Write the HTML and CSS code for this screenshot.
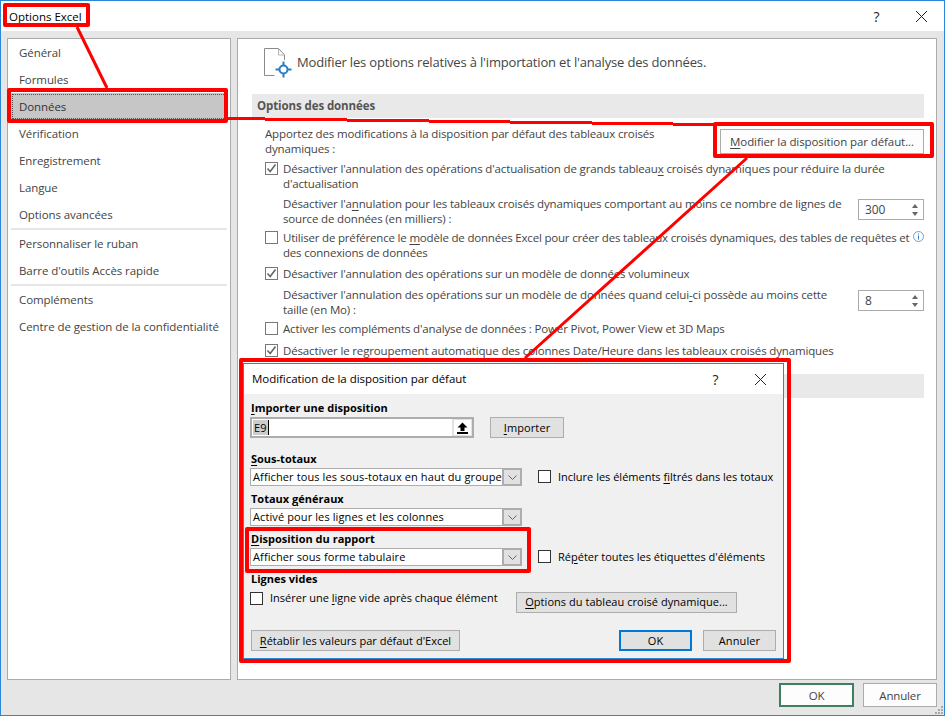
FILE: index.html
```html
<!DOCTYPE html>
<html lang="fr">
<head>
    <meta charset="UTF-8">
    <meta name="viewport" content="width=device-width, initial-scale=1.0">
    <title>Options Excel</title>
    <link rel="stylesheet" href="styles.css">
</head>
<body>
    <div class="window">
        <div class="titlebar">
            <span class="title">Options Excel</span>
            <span class="title-btn help">?</span>
            <span class="title-btn">
                <svg width="13" height="13" viewBox="0 0 13 13"><path d="M1 1 L12 12 M12 1 L1 12" stroke="#222" fill="none"/></svg>
            </span>
        </div>

        <div class="main">
            <div class="nav">
                <div class="nav-item">Général</div>
                <div class="nav-item">Formules</div>
                <div class="nav-item selected">Données</div>
                <div class="nav-item">Vérification</div>
                <div class="nav-item">Enregistrement</div>
                <div class="nav-item">Langue</div>
                <div class="nav-item">Options avancées</div>
                <div class="nav-sep"></div>
                <div class="nav-item">Personnaliser le ruban</div>
                <div class="nav-item">Barre d'outils Accès rapide</div>
                <div class="nav-sep"></div>
                <div class="nav-item">Compléments</div>
                <div class="nav-item">Centre de gestion de la confidentialité</div>
            </div>

            <div class="panel">
                <div class="panel-head">
                    <svg class="head-icon" width="30" height="32" viewBox="0 0 30 32">
                        <path d="M10.5 28.5 H0.5 V1.5 H14.5 L20.5 8 V13" fill="none" stroke="#8a8a8a"/>
                        <path d="M14.5 1.5 V8 H20.5" fill="none" stroke="#b5b5b5"/>
                        <circle cx="19.5" cy="22.5" r="4" fill="#fff" stroke="#2e7cc4" stroke-width="2"/>
                        <path d="M19.5 14.5 V18 M19.5 27 V30.5 M11.5 22.5 H15 M24 22.5 H27.5" stroke="#2e7cc4" stroke-width="2" fill="none"/>
                    </svg>
                    <span class="head-text">Modifier les options relatives à l'importation et l'analyse des données.</span>
                </div>

                <div class="section-bar">Options des données</div>

                <div class="options">
                    <div class="intro">
                        <div>Apportez des modifications à la disposition par défaut des tableaux croisés<br>dynamiques :</div>
                        <div class="btn btn-modify"><span><u>M</u>odifier la disposition par défaut...</span></div>
                    </div>

                    <div class="check-row row-1">
                        <span class="box checked">
                            <svg width="11" height="11" viewBox="0 0 11 11"><path d="M1.5 5.5 L4.2 8.5 L9.5 1.5" fill="none" stroke="#666" stroke-width="1.6"/></svg>
                        </span>
                        <div>Désactiver l'annulation des opérations d'actualisation de grands tableau<u>x</u> croisés dynamiques pour réduire la durée<br>d'actualisation</div>
                    </div>
                    <div class="sub-row row-2">
                        <div>Désactiver l'a<u>n</u>nulation pour les tableaux croisés dynamiques comportant au moins ce nombre de lignes de<br>source de données (en milliers) :</div>
                        <div class="spinner">300<span class="spin-arrows"><i class="up"></i><i class="down"></i></span></div>
                    </div>
                    <div class="check-row row-3 tight">
                        <span class="box"></span>
                        <div>Utiliser de préférence le <u>m</u>odèle de données Excel pour créer des tableaux croisés dynamiques, des tables de requêtes et<br>des connexions de données</div>
                        <svg class="info" width="11" height="11" viewBox="0 0 11 11">
                            <circle cx="5.5" cy="5.5" r="5" fill="none" stroke="#6f9fd8"/>
                            <path d="M5.5 2.5 V3.5 M5.5 4.5 V8.5" stroke="#2e7cc4" fill="none"/>
                        </svg>
                    </div>
                    <div class="check-row row-4">
                        <span class="box checked">
                            <svg width="11" height="11" viewBox="0 0 11 11"><path d="M1.5 5.5 L4.2 8.5 L9.5 1.5" fill="none" stroke="#666" stroke-width="1.6"/></svg>
                        </span>
                        <div>Désactiver l'annulation des opérations sur un modèle de données volumineux</div>
                    </div>
                    <div class="sub-row row-4">
                        <div>Désactiver l'annulation des opérations sur un modèle de données quand celui<u>-</u>ci possède au moins cette<br>taille (en Mo) :</div>
                        <div class="spinner">8<span class="spin-arrows"><i class="up"></i><i class="down"></i></span></div>
                    </div>
                    <div class="check-row row-3">
                        <span class="box"></span>
                        <div>Activer les compléments d'analyse de données : Power Pivot, Power View et 3D Maps</div>
                    </div>
                    <div class="check-row row-5">
                        <span class="box checked">
                            <svg width="11" height="11" viewBox="0 0 11 11"><path d="M1.5 5.5 L4.2 8.5 L9.5 1.5" fill="none" stroke="#666" stroke-width="1.6"/></svg>
                        </span>
                        <div>Désactiver le regroupement automatique des colonnes Date/Heure dans les tableaux croisés dynamiques</div>
                    </div>
                </div>

                <div class="section-bar bar-2"></div>
            </div>
        </div>

        <div class="footer">
            <div class="btn btn-ok">OK</div>
            <div class="btn btn-cancel">Annuler</div>
        </div>
        <svg class="grip" width="10" height="10" viewBox="0 0 10 10" fill="#a8a8a8">
            <rect x="7" y="1" width="2" height="2"/><rect x="4" y="4" width="2" height="2"/><rect x="7" y="4" width="2" height="2"/>
            <rect x="1" y="7" width="2" height="2"/><rect x="4" y="7" width="2" height="2"/><rect x="7" y="7" width="2" height="2"/>
        </svg>

        <!-- boite de dialogue par dessus -->
        <div class="dialog">
            <div class="dlg-titlebar">
                <span class="dlg-title">Modification de la disposition par défaut</span>
                <span class="title-btn help">?</span>
                <span class="title-btn">
                    <svg width="13" height="13" viewBox="0 0 13 13"><path d="M1 1 L12 12 M12 1 L1 12" stroke="#222" fill="none"/></svg>
                </span>
            </div>
            <div class="dlg-body">
                <div class="dlg-label first"><u>I</u>mporter une disposition</div>
                <div class="import-row">
                    <div class="ref-input">
                        <span class="ref-value"><span class="sel">E9</span><span class="caret"></span></span>
                        <span class="ref-btn">
                            <svg width="11" height="12" viewBox="0 0 11 12"><path d="M5.5 0.5 L10.5 5.5 H7.5 V9 H3.5 V5.5 H0.5 Z" fill="#000"/><rect x="0" y="10" width="11" height="2" fill="#000"/></svg>
                        </span>
                    </div>
                    <div class="btn dlg-btn btn-import"><span><u>I</u>mporter</span></div>
                </div>

                <div class="dlg-label l-sub"><u>S</u>ous-totaux</div>
                <div class="field-row">
                    <div class="select"><span class="sel-text">Afficher tous les sous-totaux en haut du groupe</span><span class="sel-arrow"><svg width="9" height="5" viewBox="0 0 9 5"><path d="M0.5 0.5 L4.5 4.5 L8.5 0.5" fill="none" stroke="#666"/></svg></span></div>
                    <div class="dlg-check"><span class="box dark"></span><span>Inclure les éléments <u>f</u>iltrés dans les totaux</span></div>
                </div>

                <div class="dlg-label l-next">Totaux <u>g</u>énéraux</div>
                <div class="select"><span class="sel-text">Activé pour les lignes et les colonnes</span><span class="sel-arrow"><svg width="9" height="5" viewBox="0 0 9 5"><path d="M0.5 0.5 L4.5 4.5 L8.5 0.5" fill="none" stroke="#666"/></svg></span></div>

                <div class="dlg-label l-next"><u>D</u>isposition du rapport</div>
                <div class="field-row">
                    <div class="select"><span class="sel-text">Afficher sous forme tabulaire</span><span class="sel-arrow"><svg width="9" height="5" viewBox="0 0 9 5"><path d="M0.5 0.5 L4.5 4.5 L8.5 0.5" fill="none" stroke="#666"/></svg></span></div>
                    <div class="dlg-check"><span class="box dark"></span><span>Ré<u>p</u>éter toutes les étiquettes d'éléments</span></div>
                </div>

                <div class="dlg-label l-next">Lignes vides</div>
                <div class="blank-row">
                    <div class="dlg-check blank-check"><span class="box dark"></span><span class="blank-text">Insérer une <u>l</u>igne vide après chaque élément</span></div>
                    <div class="btn dlg-btn btn-pivot"><span class="sel-text"><u>O</u>ptions du tableau croisé dynamique...</span></div>
                </div>

                <div class="dlg-actions">
                    <div class="btn dlg-btn btn-reset"><span><u>R</u>établir les valeurs par défaut d'Excel</span></div>
                    <div class="dlg-actions-right">
                        <div class="btn dlg-btn btn-dlg-ok">OK</div>
                        <div class="btn dlg-btn btn-dlg-cancel">Annuler</div>
                    </div>
                </div>
            </div>
        </div>

        <!-- annotations rouges -->
        <svg class="annot-lines" width="945" height="716" viewBox="0 0 945 716">
            <path d="M77 27 L107 88" stroke="#f00" stroke-width="3" fill="none"/>
            <path d="M228 118 H265 M265 119 H347 M347 120 H429 M429 121 H510 M510 122 H592 M592 123 H673 M673 124 H714" stroke="#f00" stroke-width="3" fill="none" shape-rendering="crispEdges"/>
            <path d="M747 158 L525 358" stroke="#f00" stroke-width="3" fill="none"/>
        </svg>
        <div class="annot a-title"></div>
        <div class="annot a-data"></div>
        <div class="annot a-modify"></div>
        <div class="annot a-dialog"></div>
        <div class="annot a-report"></div>
    </div>
</body>
</html>
```

FILE: styles.css
```css
* {
    box-sizing: border-box;
}

body {
    margin: 0;
    font-family: "Open Sans", "Noto Sans", sans-serif;
    font-size: 11.5px;
    line-height: 15px;
    letter-spacing: -0.15px;
    color: #444;
    background: #fff;
}

u {
    text-underline-offset: 2px;
}

.window {
    position: relative;
    width: 945px;
    height: 716px;
    border: 1px solid #2b88d8;
    background: #e6e6e6;
    overflow: hidden;
}

/* title bars */
.titlebar {
    display: flex;
    align-items: center;
    height: 30px;
    background: #fff;
}

.title {
    flex: 1;
    padding-left: 8px;
    color: #000;
    letter-spacing: 0;
}

.title-btn {
    display: flex;
    align-items: center;
    justify-content: center;
    width: 45px;
    height: 30px;
    color: #222;
}

.help {
    font-size: 14px;
}

/* main area */
.main {
    display: flex;
    gap: 6px;
    padding: 7px 7px 0 6px;
}

.nav {
    width: 224px;
    height: 642px;
    background: #fff;
    border: 1px solid #ababab;
    padding: 0 3px;
    letter-spacing: -0.08px;
}

.nav-item {
    display: flex;
    align-items: center;
    height: 27px;
    padding-left: 8px;
}

.nav-item.selected {
    background: #c6c6c6;
    outline: 1px dotted #555;
    outline-offset: -2px;
    color: #333;
}

.nav-sep {
    height: 2px;
    margin: 0;
    background: #e6e6e6;
}

.panel {
    width: 700px;
    height: 642px;
    background: #fff;
    border: 1px solid #ababab;
    padding: 0 12px 0 14px;
}

.panel-head {
    display: flex;
    align-items: center;
    height: 55px;
    padding: 0 0 8px 12px;
}

.head-icon {
    flex: none;
    margin-right: 3px;
}

.head-text {
    font-size: 13px;
    letter-spacing: -0.17px;
    white-space: nowrap;
}

.section-bar {
    height: 24px;
    padding-left: 5px;
    background: #e9e9e9;
    font-weight: 700;
    line-height: 23px;
    color: #555;
    letter-spacing: -0.1px;
}

.bar-2 {
    margin-top: 16px;
}

.options {
    padding: 8px 0 0 13px;
    white-space: nowrap;
}

.intro {
    display: flex;
    justify-content: space-between;
    align-items: flex-start;
}

.check-row,
.sub-row {
    display: flex;
    align-items: flex-start;
}

.sub-row {
    justify-content: space-between;
    padding-left: 18px;
}

.row-1 {
    margin-top: 5px;
}

.row-2 {
    margin-top: 5px;
}

.row-3 {
    margin-top: 4px;
}

.row-4 {
    margin-top: 6px;
}

.row-5 {
    margin-top: 7px;
}

.tight {
    letter-spacing: -0.19px;
}

.box {
    display: flex;
    flex: none;
    align-items: center;
    justify-content: center;
    width: 13px;
    height: 13px;
    margin: 1px 5px 0 0;
    border: 1px solid #777;
    background: #fff;
}

.box.dark {
    border-color: #333;
    margin: 0 7px 0 0;
}

.info {
    position: absolute;
    right: 20px;
    margin-top: 1px;
}

.spinner {
    display: flex;
    align-items: center;
    justify-content: space-between;
    width: 66px;
    height: 21px;
    margin-top: 3px;
    padding: 0 5px 0 6px;
    border: 1px solid #ababab;
    font-size: 12px;
    background: #fff;
}

.spin-arrows {
    display: flex;
    flex-direction: column;
    gap: 4px;
}

.spin-arrows i {
    display: block;
    width: 0;
    height: 0;
    border-left: 3px solid transparent;
    border-right: 3px solid transparent;
}

.spin-arrows .up {
    border-bottom: 4px solid #666;
}

.spin-arrows .down {
    border-top: 4px solid #666;
}

/* buttons */
.btn {
    display: flex;
    align-items: center;
    justify-content: center;
    border: 1px solid #ababab;
    background: #fdfdfd;
    white-space: nowrap;
}

.btn-modify {
    width: 204px;
    height: 25px;
    margin: 3px 0 0;
    letter-spacing: -0.09px;
}

.footer {
    display: flex;
    justify-content: flex-end;
    gap: 9px;
    padding: 3px 7px 0 0;
}

.btn-ok {
    width: 75px;
    height: 24px;
    border: 2px solid #3f7f5f;
}

.btn-cancel {
    width: 74px;
    height: 24px;
}

.grip {
    position: absolute;
    right: 0;
    bottom: 0;
}

/* dialog */
.dialog {
    position: absolute;
    left: 242px;
    top: 362px;
    width: 541px;
    height: 296px;
    border: 1px solid #2b88d8;
    background: #f0f0f0;
    color: #000;
    font-size: 11px;
    letter-spacing: 0.11px;
    white-space: nowrap;
}

.dlg-titlebar {
    display: flex;
    align-items: center;
    height: 30px;
    background: #fff;
}

.dlg-title {
    flex: 1;
    margin-top: -2px;
    padding-left: 8px;
    font-size: 11.5px;
    letter-spacing: -0.05px;
}

.dlg-body {
    padding: 0 7px 0 6px;
}

.dlg-label {
    font-weight: 700;
    padding-left: 1px;
    letter-spacing: 0;
}

.dlg-label.first {
    margin-top: 6px;
}

.l-sub {
    margin-top: 13px;
}

.l-next {
    margin-top: 5px;
}

.import-row {
    display: flex;
    align-items: center;
    gap: 16px;
    margin-top: 2px;
}

.ref-input {
    display: flex;
    justify-content: space-between;
    width: 224px;
    height: 21px;
    border: 2px solid #adadad;
    background: #fff;
}

.ref-value {
    display: flex;
    align-items: center;
    padding-left: 1px;
}

.sel {
    background: #ccc;
    padding: 0 1px;
}

.caret {
    width: 1px;
    height: 15px;
    background: #000;
}

.ref-btn {
    display: flex;
    align-items: center;
    justify-content: center;
    width: 20px;
    border: 2px solid #e1e1e1;
    border-width: 1px 1px 1px 2px;
}

.btn-import {
    width: 74px;
    height: 21px;
}

.dlg-btn {
    background: #e1e1e1;
    border-color: #adadad;
}

.field-row {
    display: flex;
    align-items: center;
    gap: 16px;
    margin-top: 2px;
}

.field-row .dlg-check {
    margin-top: -2px;
}

.field-row + .dlg-label {
    margin-top: 5px;
}

.dlg-body > .select {
    margin-top: 2px;
}

.select {
    display: flex;
    justify-content: space-between;
    align-items: center;
    flex: none;
    width: 272px;
    height: 18px;
    padding-left: 2px;
    border: 1px solid #adadad;
    background: #fff;
}

.sel-text,
.blank-text {
    margin-top: -2px;
}

.sel-arrow {
    display: flex;
    flex: none;
    align-items: center;
    justify-content: center;
    width: 20px;
    height: 18px;
    margin-right: -1px;
    background: #e1e1e1;
    border: 2px solid #adadad;
}

.dlg-check {
    display: flex;
    align-items: center;
    letter-spacing: 0;
}

.blank-row {
    display: flex;
    align-items: flex-start;
    justify-content: space-between;
    width: 487px;
    margin-top: 6px;
}

.btn-pivot {
    width: 221px;
    height: 21px;
    letter-spacing: 0.04px;
}

.dlg-actions {
    display: flex;
    justify-content: space-between;
    margin-top: 17px;
    padding-left: 1px;
}

.dlg-actions-right {
    display: flex;
    gap: 11px;
}

.btn-reset {
    width: 209px;
    height: 21px;
    letter-spacing: 0;
}

.btn-dlg-ok {
    width: 73px;
    height: 21px;
    border: 2px solid #0078d7;
}

.btn-dlg-cancel {
    width: 73px;
    height: 21px;
}

/* red annotations */
.annot {
    position: absolute;
    border: 4px solid #f00;
    border-radius: 2px;
}

.annot-lines {
    position: absolute;
    left: -1px;
    top: -1px;
}

.a-title {
    left: 2px;
    top: 2px;
    width: 87px;
    height: 24px;
}

.a-data {
    left: 6px;
    top: 87px;
    width: 221px;
    height: 35px;
}

.a-modify {
    left: 712px;
    top: 121px;
    width: 221px;
    height: 36px;
}

.a-dialog {
    left: 238px;
    top: 357px;
    width: 552px;
    height: 305px;
}

.a-report {
    left: 244px;
    top: 526px;
    width: 286px;
    height: 46px;
}
```
